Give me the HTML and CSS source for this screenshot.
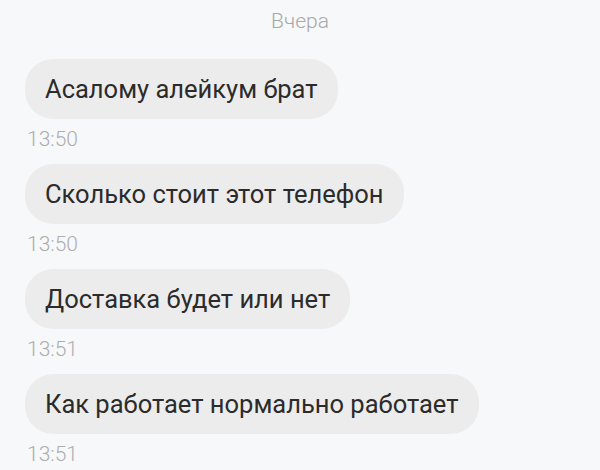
FILE: index.html
```html
<!DOCTYPE html>
<html lang="ru">
<head>
    <meta charset="UTF-8">
    <meta name="viewport" content="width=device-width, initial-scale=1.0">
    <title>Чат</title>
    <link rel="stylesheet" href="styles.css">
</head>
<body>
    <div class="chat">
        <div class="day-label">Вчера</div>

        <div class="message">
            <div class="bubble">Асалому алейкум брат</div>
            <div class="time">13:50</div>
        </div>
        <div class="message">
            <div class="bubble">Сколько стоит этот телефон</div>
            <div class="time">13:50</div>
        </div>
        <div class="message">
            <div class="bubble">Доставка будет или нет</div>
            <div class="time">13:51</div>
        </div>
        <div class="message">
            <div class="bubble">Как работает нормально работает</div>
            <div class="time">13:51</div>
        </div>
    </div>
</body>
</html>
```

FILE: styles.css
```css
/* Page */
body {
    margin: 0;
    background: #f7f8fa;
    font-family: Roboto, "Noto Sans", Arial, sans-serif;
    overflow: hidden;
}

.chat {
    display: flex;
    flex-direction: column;
    align-items: flex-start;
    padding: 9px 0 0 25px;
}

/* Day separator */
.day-label {
    align-self: stretch;
    margin-left: -25px;
    text-align: center;
    font-size: 21px;
    font-weight: 300;
    line-height: 24px;
    color: #a9a9a9;
    margin-bottom: 26px;
}

/* Message bubbles */
.message {
    display: flex;
    flex-direction: column;
    align-items: flex-start;
}

.bubble {
    background: #ececec;
    color: #2b2b2b;
    font-size: 25.5px;
    line-height: 60px;
    height: 60px;
    padding: 0 20px;
    border-radius: 28px;
    white-space: nowrap;
}

.time {
    font-size: 21px;
    font-weight: 300;
    line-height: 24px;
    color: #aeaeae;
    margin: 8px 0 13px 2px;
}
```
